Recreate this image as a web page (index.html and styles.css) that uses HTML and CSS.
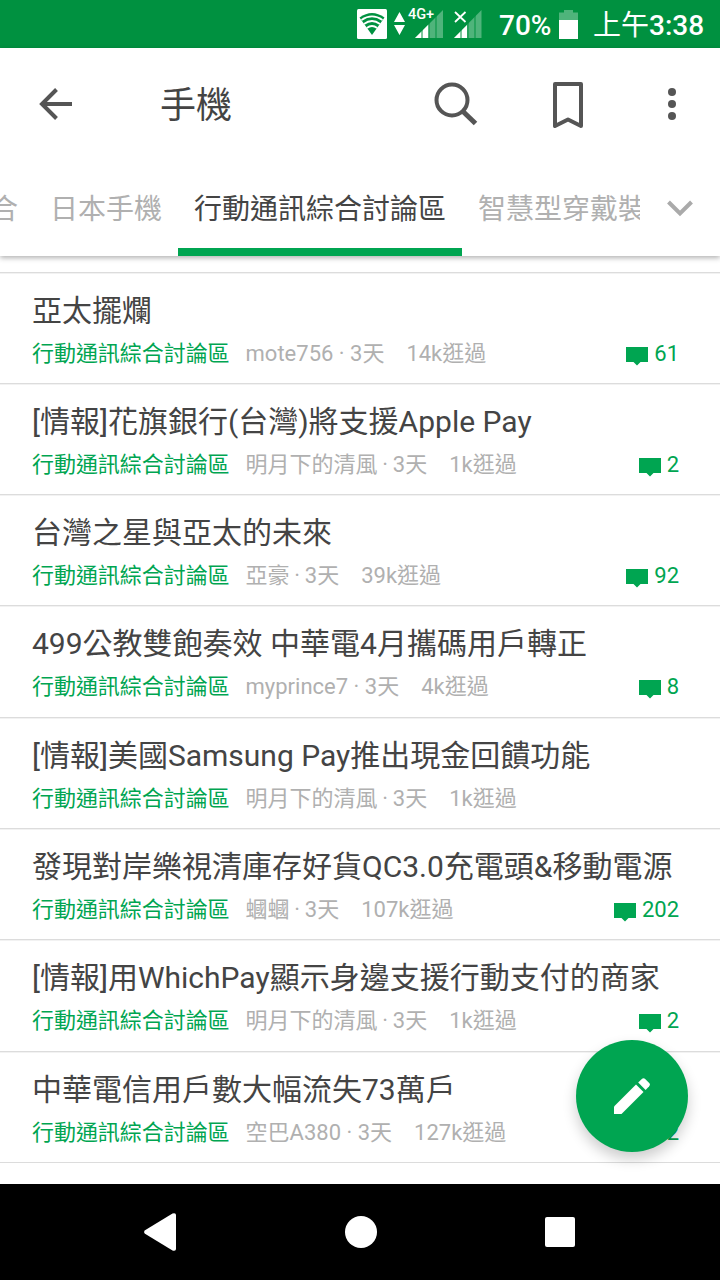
FILE: index.html
```html
<!DOCTYPE html>
<html lang="zh-Hant">
<head>
<meta charset="utf-8">
<title>手機</title>
<link rel="stylesheet" href="styles.css">
</head>
<body>
<div class="screen">
  <div class="status">
    <svg class="status-icons" width="132" height="48" viewBox="0 0 132 48">
      <rect x="0" y="9" width="30" height="30" rx="1.5" fill="#fff"/>
      <path d="M2.500 17.500Q15 8.500 27.500 17.500L15 35Z" fill="#009140"/>
      <path d="M4.500 20Q15 12.800 25.500 20M7 24Q15 18 23 24M9.800 28Q15 24 20.200 28" fill="none" stroke="#fff" stroke-width="1.8"/>
      <path d="M42.500 12L48 22H37ZM42.500 35L48 25H37Z" fill="#fff"/>
      <text class="network" x="51" y="18.5">4G+</text>
      <path d="M58 38L86 10V38Z" fill="#4fb47b"/>
      <path d="M58 38L71.500 24.500V38Z" fill="#fff"/>
      <path d="M65 26V38M72 20V38M79 14V38" stroke="#009140" stroke-width="1"/>
      <path d="M97 38L124.500 10V38Z" fill="#4fb47b"/>
      <path d="M97 38L110 25V38Z" fill="#fff"/>
      <path d="M104 26V38M111 20V38M118 14V38" stroke="#009140" stroke-width="1"/>
      <path d="M98 12L108.500 22M108.500 12L98 22" stroke="#fff" stroke-width="1.8"/>
    </svg>
    <span class="percent">70%</span>
    <svg class="battery" width="19" height="30" viewBox="0 0 19 30">
      <path d="M0 3.500H5V1H14V3.500H19V11H0Z" fill="#4fb47b"/>
      <path d="M0 11H19V30H0Z" fill="#fff"/>
    </svg>
    <span class="clock"><span class="period">上午</span>3:38</span>
  </div>

  <header class="header">
    <div class="toolbar">
      <svg class="back" width="34" height="34" viewBox="0 0 34 34"><path d="M33 17H4M17.500 2.500L3 17L17.500 31.500" fill="none" stroke="#555" stroke-width="4"/></svg>
      <h1 class="title">手機</h1>
      <svg class="search" width="44" height="44" viewBox="0 0 44 44"><circle cx="18" cy="18" r="15.500" fill="none" stroke="#555" stroke-width="4"/><path d="M28.500 29L41.500 41.500" stroke="#555" stroke-width="5"/></svg>
      <svg class="bookmark" width="32" height="48" viewBox="0 0 32 48"><path d="M3 3H29V45L16 38.500L3 45Z" fill="none" stroke="#555" stroke-width="4" stroke-linejoin="round"/></svg>
      <svg class="more" width="8" height="32" viewBox="0 0 8 32"><g fill="#555"><circle cx="4" cy="4" r="4"/><circle cx="4" cy="16" r="4"/><circle cx="4" cy="28" r="4"/></g></svg>
    </div>
    <div class="tabs">
      <div class="tab-strip">
        <span class="tab tab-cut">合</span>
        <span class="tab">日本手機</span>
        <span class="tab tab-active">行動通訊綜合討論區</span>
        <span class="tab">智慧型穿戴裝</span>
      </div>
      <svg class="chevron" width="26" height="18" viewBox="0 0 26 18"><path d="M1.500 2L13 13.500L24.500 2" fill="none" stroke="#aaa" stroke-width="4"/></svg>
    </div>
  </header>

  <main class="list">
    <article class="row"><h2 class="topic">亞太擺爛</h2><div class="meta"><span class="board">行動通訊綜合討論區</span><span class="author">mote756 · 3天</span><span class="views">14k逛過</span><span class="replies"><svg class="bubble" width="22" height="19" viewBox="0 0 22 19"><path d="M0 0H22V15H14.500L11 18.500L7.500 15H0Z" fill="#00a551"/></svg>61</span></div></article>
    <article class="row"><h2 class="topic">[情報]花旗銀行(台灣)將支援Apple Pay</h2><div class="meta"><span class="board">行動通訊綜合討論區</span><span class="author author-cjk">明月下的清風 · 3天</span><span class="views">1k逛過</span><span class="replies"><svg class="bubble" width="22" height="19" viewBox="0 0 22 19"><path d="M0 0H22V15H14.500L11 18.500L7.500 15H0Z" fill="#00a551"/></svg>2</span></div></article>
    <article class="row"><h2 class="topic">台灣之星與亞太的未來</h2><div class="meta"><span class="board">行動通訊綜合討論區</span><span class="author author-cjk">亞豪 · 3天</span><span class="views">39k逛過</span><span class="replies"><svg class="bubble" width="22" height="19" viewBox="0 0 22 19"><path d="M0 0H22V15H14.500L11 18.500L7.500 15H0Z" fill="#00a551"/></svg>92</span></div></article>
    <article class="row"><h2 class="topic">499公教雙飽奏效 中華電4月攜碼用戶轉正</h2><div class="meta"><span class="board">行動通訊綜合討論區</span><span class="author">myprince7 · 3天</span><span class="views">4k逛過</span><span class="replies"><svg class="bubble" width="22" height="19" viewBox="0 0 22 19"><path d="M0 0H22V15H14.500L11 18.500L7.500 15H0Z" fill="#00a551"/></svg>8</span></div></article>
    <article class="row"><h2 class="topic">[情報]美國Samsung Pay推出現金回饋功能</h2><div class="meta"><span class="board">行動通訊綜合討論區</span><span class="author author-cjk">明月下的清風 · 3天</span><span class="views">1k逛過</span></div></article>
    <article class="row"><h2 class="topic">發現對岸樂視清庫存好貨QC3.0充電頭&amp;移動電源</h2><div class="meta"><span class="board">行動通訊綜合討論區</span><span class="author author-cjk">蟈蟈 · 3天</span><span class="views">107k逛過</span><span class="replies"><svg class="bubble" width="22" height="19" viewBox="0 0 22 19"><path d="M0 0H22V15H14.500L11 18.500L7.500 15H0Z" fill="#00a551"/></svg>202</span></div></article>
    <article class="row"><h2 class="topic">[情報]用WhichPay顯示身邊支援行動支付的商家</h2><div class="meta"><span class="board">行動通訊綜合討論區</span><span class="author author-cjk">明月下的清風 · 3天</span><span class="views">1k逛過</span><span class="replies"><svg class="bubble" width="22" height="19" viewBox="0 0 22 19"><path d="M0 0H22V15H14.500L11 18.500L7.500 15H0Z" fill="#00a551"/></svg>2</span></div></article>
    <article class="row"><h2 class="topic">中華電信用戶數大幅流失73萬戶</h2><div class="meta"><span class="board">行動通訊綜合討論區</span><span class="author">空巴A380 · 3天</span><span class="views">127k逛過</span><span class="replies"><svg class="bubble" width="22" height="19" viewBox="0 0 22 19"><path d="M0 0H22V15H14.500L11 18.500L7.500 15H0Z" fill="#00a551"/></svg>2</span></div></article>
  </main>

  <div class="fab">
    <svg width="36" height="36" viewBox="0 0 36 36" fill="#fff"><path d="M0 28.500L22 6.500L29.500 14L7.500 36H0Z"/><path d="M24.200 4.500L27.800 .9Q29.500 -.6 31.200 .9L35.200 4.900Q36.700 6.600 35.200 8.300L31.600 11.900Z"/></svg>
  </div>

  <nav class="navbar">
    <svg width="32" height="38" viewBox="0 0 32 38"><path d="M1 17.200L28.500 .5Q32 -.5 32 2V36Q32 38.500 28.500 37.500L1 20.800Q-.8 19 1 17.200Z" fill="#fff"/></svg>
    <svg width="32" height="32" viewBox="0 0 32 32"><circle cx="16" cy="16" r="16" fill="#fff"/></svg>
    <svg width="30" height="30" viewBox="0 0 30 30"><rect width="30" height="30" rx="2" fill="#fff"/></svg>
  </nav>
</div>
</body>
</html>
```
FILE: styles.css
```css
* { box-sizing: border-box; }
body { margin: 0; }
svg { display: block; flex: none; }
.screen {
  position: relative;
  display: flex;
  flex-direction: column;
  width: 720px;
  height: 1280px;
  overflow: hidden;
  background: #fff;
  color: #444;
  font-family: Roboto, "Noto Sans CJK TC", sans-serif;
}
.status {
  display: flex;
  align-items: center;
  flex: none;
  height: 48px;
  padding-left: 357px;
  background: #009140;
  color: #fff;
  font-size: 28px;
  line-height: 48px;
  white-space: nowrap;
}
.network { font: 500 14.5px Roboto, sans-serif; fill: #fff; }
.percent { width: 70px; padding: 3px 0 0 10px; font-weight: 500; }
.battery { margin-bottom: 1px; }
.clock { margin-left: 15px; padding-top: 3px; font-weight: 500; }
.period { font-weight: 400; }
.header {
  position: relative;
  flex: none;
  height: 208px;
  background: #fff;
  box-shadow: 0 2px 5px rgba(0, 0, 0, .3);
}
.toolbar { display: flex; align-items: center; height: 112px; padding: 0 44px 0 39px; }
.title { margin: 4px 0 0 87px; font-size: 36px; font-weight: 400; line-height: 48px; }
.search { margin-left: 202px; }
.bookmark { margin: 2px 0 0 74px; }
.more { margin-left: 84px; }
.tabs { display: flex; height: 96px; }
.tab-strip { display: flex; width: 640px; overflow: hidden; white-space: nowrap; }
.tab {
  flex: none;
  height: 96px;
  padding: 2px 16px 0;
  border-bottom: 8px solid transparent;
  color: #b0b0b0;
  font-size: 28px;
  line-height: 96px;
}
.tab-cut { margin-left: -26px; }
.tab-active { border-bottom-color: #00a551; color: #444; }
.chevron { margin: 40px 0 0 27px; }
.list { flex: none; height: 928px; padding-top: 15.5px; }
.row {
  height: 111.3px;
  padding: 16px 41px 0 32px;
  border-top: 1px solid #dcdcdc;
  box-shadow: inset 0 1px #f2f2f2;
}
.row:last-child { height: 112px; border-bottom: 1px solid #dcdcdc; }
.topic { margin: 0; font-size: 30px; font-weight: 400; line-height: 44px; white-space: nowrap; }
.meta { display: flex; color: #b0b0b0; font-size: 22px; line-height: 42px; white-space: nowrap; }
.board { color: #00a551; letter-spacing: -.05px; }
.author { margin-left: 16px; }
.author-cjk { word-spacing: -.7px; }
.views { margin-left: 22px; }
.replies { display: flex; align-items: center; gap: 6px; margin-left: auto; color: #00a551; }
.bubble { margin-top: 5px; }
.fab {
  position: absolute;
  right: 32px;
  bottom: 128px;
  display: flex;
  align-items: center;
  justify-content: center;
  width: 112px;
  height: 112px;
  border-radius: 50%;
  background: #00a551;
  box-shadow: 0 7px 14px rgba(0, 0, 0, .2);
}
.navbar {
  position: relative;
  display: flex;
  align-items: center;
  justify-content: space-between;
  flex: none;
  height: 96px;
  padding: 0 145px 0 144px;
  background: #000;
}
```
